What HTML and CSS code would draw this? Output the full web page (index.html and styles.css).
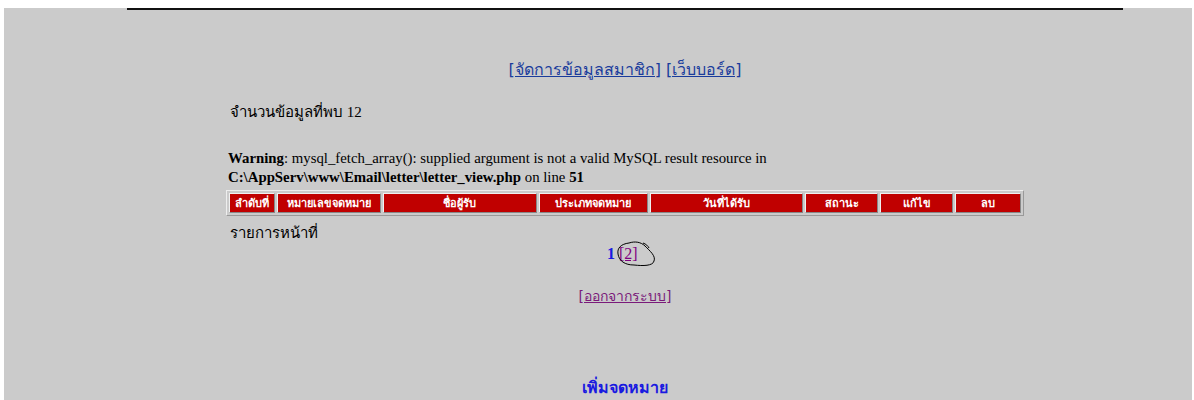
FILE: index.html
```html
<!DOCTYPE html>
<html lang="th">
<head>
    <meta charset="UTF-8">
    <title>letter_view</title>
    <link rel="stylesheet" href="styles.css">
</head>
<body>
    <div class="page">
        <div class="wrap">
            <div class="menu">
                <a href="#">[จัดการข้อมูลสมาชิก]</a> <a href="#">[เว็บบอร์ด]</a>
            </div>

            <div class="count">จำนวนข้อมูลที่พบ 12</div>

            <div class="warning">
                <b>Warning</b>: mysql_fetch_array(): supplied argument is not a valid MySQL result resource in
                <br><b>C:\AppServ\www\Email\letter\letter_view.php</b> on line <b>51</b>
            </div>

            <table class="letters">
                <tr>
                    <th>ลำดับที่</th>
                    <th>หมายเลขจดหมาย</th>
                    <th>ชื่อผู้รับ</th>
                    <th>ประเภทจดหมาย</th>
                    <th>วันที่ได้รับ</th>
                    <th>สถานะ</th>
                    <th>แก้ไข</th>
                    <th>ลบ</th>
                </tr>
            </table>

            <div class="pages-label">รายการหน้าที่</div>
            <div class="pager">
                <span class="current">1</span><a href="#" class="page-link">[2]</a>
                <svg class="scribble" width="44" height="30" viewBox="0 0 44 30">
                    <path d="M14 4 C6 5 2 9 3 15 C4 22 10 26 19 26 C28 27 38 27 39 22 C41 17 35 12 30 7 C26 3 20 2 14 4 M28 4 C31 5 33 7 34 9" fill="none" stroke="#000" stroke-width="1"/>
                </svg>
            </div>

            <div class="logout"><a href="#">[ออกจากระบบ]</a></div>

            <div class="add"><a href="#">เพิ่มจดหมาย</a></div>
        </div>
    </div>
</body>
</html>
```

FILE: styles.css
```css
body {
    margin: 0;
    background-color: #fff;
    font-family: 'Liberation Serif', serif;
    color: #000;
}

.page {
    margin: 8px 2px 0 4px;
    background-color: #cbcbcb;
    height: 392px;
    overflow: hidden;
}

.wrap {
    width: 996px;
    margin-left: 123px;
    border-top: 2px solid #111;
}

.menu {
    margin-top: 47px;
    text-align: center;
    font-family: Tahoma, 'DejaVu Sans', sans-serif;
    font-size: 16px;
}

.menu a {
    color: #1a3c9c;
}

.count {
    margin-top: 18px;
    padding-left: 103px;
    font-size: 15px;
}

.warning {
    margin-top: 25px;
    padding-left: 101px;
    font-size: 14.8px;
    line-height: 19px;
}

.letters {
    margin-left: 99px;
    margin-top: 3px;
    width: 798px;
    border: 1px solid #eee;
    border-right-color: #999;
    border-bottom-color: #999;
    border-spacing: 2px;
}

.letters th {
    background-color: #c00000;
    color: #fff;
    font-family: Tahoma, 'DejaVu Sans', sans-serif;
    font-size: 11px;
    font-weight: bold;
    height: 18px;
    padding: 0;
    border: 1px solid #f0f0f0;
    border-right-color: #888;
    border-bottom-color: #888;
}

.letters th:nth-child(1) { width: 44px; }
.letters th:nth-child(2) { width: 101px; }
.letters th:nth-child(3) { width: 152px; }
.letters th:nth-child(4) { width: 106px; }
.letters th:nth-child(5) { width: 151px; }
.letters th:nth-child(6) { width: 71px; }
.letters th:nth-child(7) { width: 70px; }
.letters th:nth-child(8) { width: 64px; }

.pages-label {
    margin-top: 5px;
    padding-left: 103px;
    font-size: 15px;
}

.pager {
    position: relative;
    width: 60px;
    margin: 0 auto;
    padding-left: 24px;
    font-size: 16px;
}

.pager .current {
    color: #1a1ae0;
    font-weight: bold;
}

.page-link {
    color: #800080;
    margin-left: 4px;
}

.scribble {
    position: absolute;
    left: 32px;
    top: -6px;
}

.logout {
    margin-top: 22px;
    text-align: center;
    font-family: Tahoma, 'DejaVu Sans', sans-serif;
    font-size: 14px;
}

.logout a {
    color: #7a1a7a;
}

.add {
    margin-top: 68px;
    text-align: center;
    font-family: Tahoma, 'DejaVu Sans', sans-serif;
    font-size: 16px;
    font-weight: bold;
}

.add a {
    color: #1a1ae0;
    text-decoration: none;
}
```
